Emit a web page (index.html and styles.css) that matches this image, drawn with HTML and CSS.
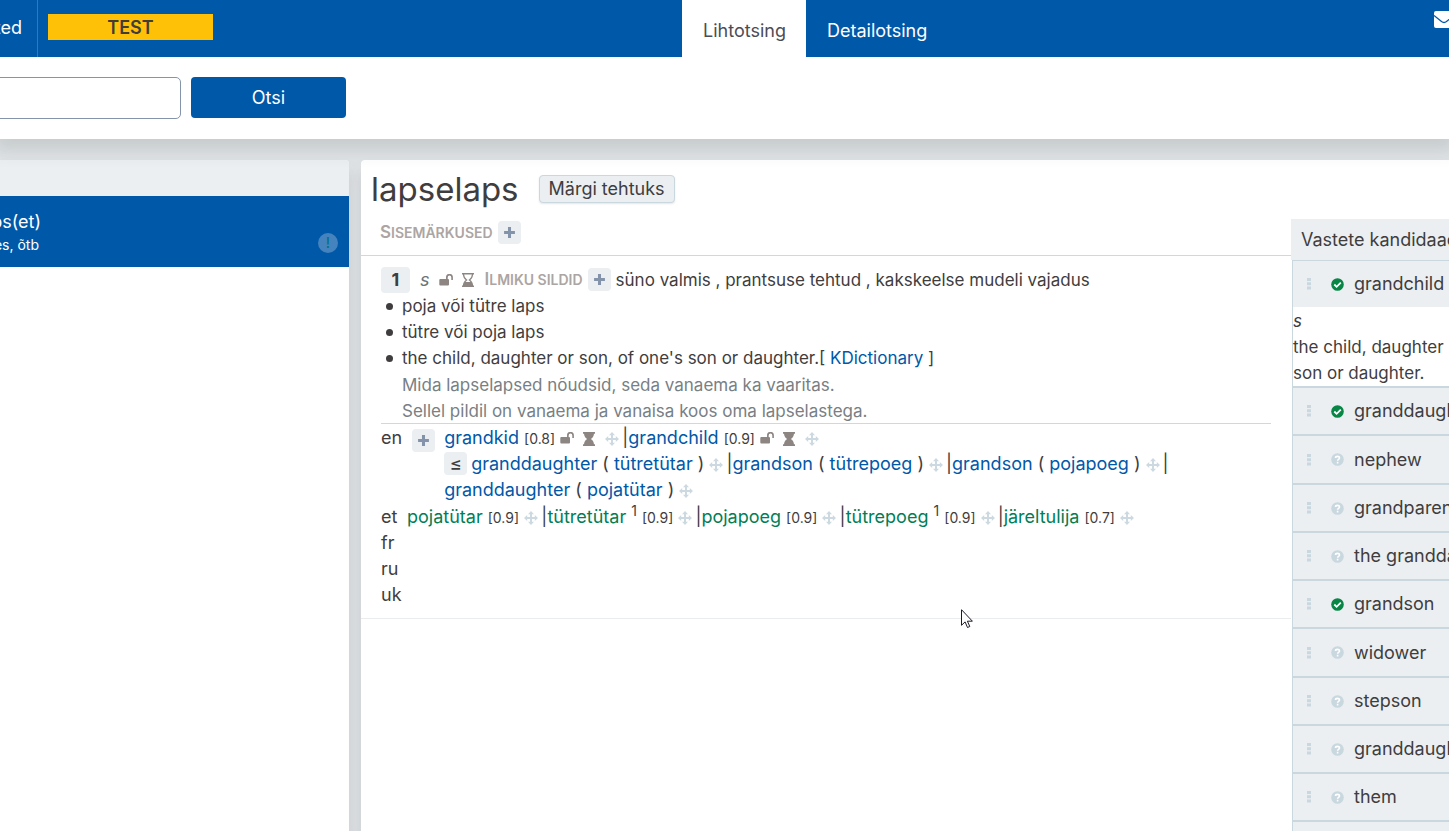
FILE: index.html
```html
<!DOCTYPE html>
<html lang="et">
<head>
<meta charset="utf-8">
<title>lapselaps</title>
<link rel="stylesheet" href="styles.css">
</head>
<body>
<svg class="sprite" aria-hidden="true">
  <symbol id="plus" viewBox="0 0 12 12"><path d="M4.600 1h2.800v3.600H11v2.800H7.400V11H4.600V7.400H1V4.600h3.600z"/></symbol>
  <symbol id="unlock" viewBox="0 0 14 12"><path d="M1.300 5H7V3.400a3.400 3.400 0 0 1 6.900 0V6h-1.600V3.400a1.800 1.800 0 0 0-3.600 0V5h.3a1 1 0 0 1 1 1v4.500a1 1 0 0 1-1 1H1.300a1 1 0 0 1-1-1V6a1 1 0 0 1 1-1z"/></symbol>
  <symbol id="hourglass" viewBox="0 0 12 14"><path d="M0 0h12v1.800H0zM0 12.200h12V14H0zM1 1h10c0 3-1 4.600-3.200 6C10 8.400 11 10 11 13H1c0-3 1-4.600 3.200-6C2 5.600 1 4 1 1z"/></symbol>
  <symbol id="hourglass-end" viewBox="0 0 12 14"><path d="M0 0h12v1.500H0zM0 12.500h12V14H0z"/><path d="M1.500 1c0 3 1 4.600 3.100 6-2.100 1.400-3.100 3-3.100 6M10.500 1c0 3-1 4.600-3.100 6 2.100 1.400 3.100 3 3.100 6" fill="none" stroke="currentColor" stroke-width="1.200"/><path d="M2.500 9h7L11 13H1z"/></symbol>
  <symbol id="move" viewBox="0 0 14 14"><path d="M7 0l3 3.200H8v2.800h2.800V4L14 7l-3.200 3V8H8v2.800h2L7 14l-3-3.200h2V8H3.200v2L0 7l3.200-3v2H6V3.200H4z"/></symbol>
  <symbol id="grip" viewBox="0 0 4 12"><path d="M0 0h4v3H0zM0 4.300h4v3H0zM0 8.600h4v3H0z"/></symbol>
  <symbol id="check" viewBox="0 0 13 13"><circle cx="6.500" cy="6.500" r="6.300"/><path d="M3.300 6.500l2.300 2.300 4.200-4.200" fill="none" stroke="#fff" stroke-width="1.800"/></symbol>
  <symbol id="question" viewBox="0 0 13 13"><circle cx="6.500" cy="6.500" r="6.300"/><path d="M4.500 5c.1-2.200 4-2.200 4 0 0 1.400-1.900 1.300-1.900 2.700M6.600 8.700v1.700" fill="none" stroke="#fff" stroke-width="1.600"/></symbol>
</svg>

<header class="topbar">
  <div class="topbar-left">
    <div class="topbar-link"><a href="#">ted</a></div>
    <div class="env">TEST</div>
  </div>
  <nav class="tabs">
    <a class="tab tab-active" href="#">Lihtotsing</a>
    <a class="tab" href="#">Detailotsing</a>
  </nav>
  <a class="mail" href="#" aria-label="E-post">
    <svg width="20" height="17" viewBox="0 0 20 17"><rect width="20" height="17" rx="2" fill="#fff"/><path d="M0 4.500l7.500 6q2.500 2 5 0l7.500-6" fill="none" stroke="#0058a9" stroke-width="1.300"/></svg>
  </a>
</header>

<form class="search">
  <input class="search-input" type="text" aria-label="Otsing">
  <button class="search-button" type="button">Otsi</button>
</form>

<main class="workspace">
  <section class="results">
    <div class="results-head"></div>
    <a class="result" href="#">
      <span class="result-word"><span>ps(et)</span></span>
      <span class="result-meta"><span>es, õtb</span></span>
      <span class="result-alert">!</span>
    </a>
  </section>

  <article class="entry">
    <div class="entry-head">
      <h1>lapselaps</h1>
      <button class="done" type="button">Märgi tehtuks</button>
    </div>
    <div class="entry-body">
      <div class="lexeme">
        <div class="notes">
          <span class="caps">Sisemärkused</span>
          <button class="add" type="button" aria-label="Lisa sisemärkus"><svg><use href="#plus"/></svg></button>
        </div>
        <div class="sense">
          <div class="sense-head">
            <button class="number" type="button">1</button>
            <em class="pos">s</em>
            <svg class="unlock"><use href="#unlock"/></svg>
            <svg class="glass"><use href="#hourglass-end"/></svg>
            <span class="caps">Ilmiku sildid</span>
            <button class="add" type="button" aria-label="Lisa silt"><svg><use href="#plus"/></svg></button>
            <span class="labels">süno valmis , prantsuse tehtud , kakskeelse mudeli vajadus</span>
          </div>
          <ul class="definitions">
            <li>poja või tütre laps</li>
            <li>tütre või poja laps</li>
            <li>the child, daughter or son, of one's son or daughter.[ <a href="#">KDictionary</a> ]</li>
          </ul>
          <div class="usages">
            <p>Mida lapselapsed nõudsid, seda vanaema ka vaaritas.</p>
            <p>Sellel pildil on vanaema ja vanaisa koos oma lapselastega.</p>
          </div>
          <div class="languages">
            <div class="language">
              <span class="code">en</span>
              <button class="add" type="button" aria-label="Lisa vaste"><svg><use href="#plus"/></svg></button>
              <div class="matches">
                <div class="line"><a href="#">grandkid</a> <small>[0.8]</small> <svg class="unlock"><use href="#unlock"/></svg> <svg class="glass"><use href="#hourglass"/></svg> <svg class="move spaced"><use href="#move"/></svg>|<a href="#">grandchild</a> <small>[0.9]</small> <svg class="unlock"><use href="#unlock"/></svg> <svg class="glass"><use href="#hourglass"/></svg> <svg class="move spaced"><use href="#move"/></svg></div>
                <div class="line"><button class="number relation" type="button">≤</button><a href="#">granddaughter</a> ( <a href="#">tütretütar</a> ) <svg class="move"><use href="#move"/></svg>|<a href="#">grandson</a> ( <a href="#">tütrepoeg</a> ) <svg class="move"><use href="#move"/></svg>|<a href="#">grandson</a> ( <a href="#">pojapoeg</a> ) <svg class="move"><use href="#move"/></svg>|</div>
                <div class="line"><a href="#">granddaughter</a> ( <a href="#">pojatütar</a> ) <svg class="move"><use href="#move"/></svg></div>
              </div>
            </div>
            <div class="language">
              <span class="code">et</span>
              <div class="line synonyms"><a href="#">pojatütar</a> <small>[0.9]</small> <svg class="move"><use href="#move"/></svg>|<a href="#">tütretütar</a> <sup>1</sup> <small>[0.9]</small> <svg class="move"><use href="#move"/></svg>|<a href="#">pojapoeg</a> <small>[0.9]</small> <svg class="move"><use href="#move"/></svg>|<a href="#">tütrepoeg</a> <sup>1</sup> <small>[0.9]</small> <svg class="move"><use href="#move"/></svg>|<a href="#">järeltulija</a> <small>[0.7]</small> <svg class="move"><use href="#move"/></svg></div>
            </div>
            <div class="language"><span class="code">fr</span></div>
            <div class="language"><span class="code">ru</span></div>
            <div class="language"><span class="code">uk</span></div>
          </div>
        </div>
      </div>

      <aside class="candidates">
        <h2>Vastete kandidaad</h2>
        <ul class="cards">
          <li>
            <div class="card"><svg class="grip"><use href="#grip"/></svg><svg class="state ok"><use href="#check"/></svg>grandchild</div>
            <div class="detail"><em>s</em><br>the child, daughter<br>son or daughter.</div>
          </li>
          <li><div class="card"><svg class="grip"><use href="#grip"/></svg><svg class="state ok"><use href="#check"/></svg>granddaugh</div></li>
          <li><div class="card"><svg class="grip"><use href="#grip"/></svg><svg class="state"><use href="#question"/></svg>nephew</div></li>
          <li><div class="card"><svg class="grip"><use href="#grip"/></svg><svg class="state"><use href="#question"/></svg>grandparen</div></li>
          <li><div class="card"><svg class="grip"><use href="#grip"/></svg><svg class="state"><use href="#question"/></svg>the grandda</div></li>
          <li><div class="card"><svg class="grip"><use href="#grip"/></svg><svg class="state ok"><use href="#check"/></svg>grandson</div></li>
          <li><div class="card"><svg class="grip"><use href="#grip"/></svg><svg class="state"><use href="#question"/></svg>widower</div></li>
          <li><div class="card"><svg class="grip"><use href="#grip"/></svg><svg class="state"><use href="#question"/></svg>stepson</div></li>
          <li><div class="card"><svg class="grip"><use href="#grip"/></svg><svg class="state"><use href="#question"/></svg>granddaugh</div></li>
          <li><div class="card"><svg class="grip"><use href="#grip"/></svg><svg class="state"><use href="#question"/></svg>them</div></li>
          <li><div class="card"></div></li>
        </ul>
      </aside>
    </div>
  </article>
</main>

<svg class="cursor" width="12" height="20" viewBox="0 0 12 20" aria-hidden="true"><path d="M.5.700v15.600l3.600-3.400 2.400 5.600 2.300-1-2.400-5.300h5z" fill="#fff" stroke="#1c1c28"/></svg>
</body>
</html>
```

FILE: styles.css
```css
* { box-sizing: border-box; }

body {
  margin: 0;
  height: 100vh;
  overflow: hidden;
  display: flex;
  flex-direction: column;
  background: #e0e4e6;
  color: #3f3d3e;
  font: 18px/26px Inter, "Open Sans", sans-serif;
}

a { color: #0058a9; text-decoration: none; }
button, input { font: inherit; color: inherit; }
button { padding: 0; border: 0; }
svg { fill: currentColor; flex: none; }
.sprite { position: absolute; width: 0; height: 0; }

/* Top bar */
.topbar { display: flex; position: relative; z-index: 2; height: 57px; flex: none; background: #0058a9; }
.topbar-left { display: flex; width: calc(47% + 1px); min-width: 220px; }
.topbar-link {
  display: flex;
  justify-content: flex-end;
  width: 38px;
  padding: 15px 15px 0 0;
  border-right: 1px solid #3379ba;
}
.topbar-link a, .tab { color: #fff; }
.env {
  width: 165px;
  height: 26px;
  margin: 14px 10px;
  background: #ffc107;
  font-weight: 600;
  line-height: 28px;
  text-align: center;
}
.tabs { display: flex; flex: 1; }
.tab { padding: 18px 20px 0 21px; }
.tab-active { background: #fff; color: #4c4c55; }
.mail { margin: 11px -5px 0 0; }
.mail svg { display: block; }

/* Search */
.search {
  display: flex;
  flex: none;
  gap: 10px;
  height: 82px;
  padding-top: 20px;
  background: #fff;
  box-shadow: 0 6px 16px 6px rgba(60, 75, 75, 0.15);
  z-index: 1;
}
.search-input {
  width: 186px;
  height: 42px;
  margin-left: -5px;
  border: 1px solid #8495ab;
  border-radius: 5px;
  background: #fff;
}
.search-button {
  width: 155px;
  height: 41px;
  border-radius: 4px;
  background: #0058a9;
  color: #fff;
}

/* Panels */
.workspace { display: flex; flex: 1; gap: 12px; min-height: 0; padding-top: 21px; }
.results {
  flex: none;
  width: 349px;
  background: #fff;
  border-radius: 0 4px 0 0;
  box-shadow: 0 10px 14px rgba(80, 75, 85, 0.16);
}
.results-head { height: 36px; background: #ebeff2; border-radius: 0 4px 0 0; }
.result {
  display: grid;
  grid-template-columns: 41px 1fr 20px;
  grid-template-rows: 24px 20px;
  height: 71px;
  padding: 13px 11px 0 0;
  background: #0058a9;
  color: #fff;
}
.result-word, .result-meta { display: flex; justify-content: flex-end; white-space: nowrap; }
.result-meta { grid-row: 2; width: 39px; font-size: 14px; line-height: 24px; }
.result-alert {
  grid-area: 2 / 3;
  height: 20px;
  border-radius: 50%;
  background: #4583be;
  color: #006f78;
  font-size: 15px;
  line-height: 20px;
  text-align: center;
}

.entry {
  display: flex;
  flex-direction: column;
  flex: 1;
  min-width: 0;
  background: #fff;
  border-radius: 4px 0 0 0;
  box-shadow: 0 10px 14px rgba(80, 75, 85, 0.16);
}
.entry-head { display: flex; align-items: center; gap: 20px; height: 58px; margin-bottom: 1px; padding-left: 10px; }
h1 { margin: 0; font-size: 33px; font-weight: 400; line-height: 40px; }
.done {
  height: 28px;
  padding: 0 9px;
  border: 1px solid #c9d7df;
  border-radius: 4px;
  background: #ebeff2;
  box-shadow: 0 1px 2px rgba(0, 0, 0, 0.1);
}
.entry-body { display: flex; flex: 1; min-height: 0; }
.lexeme { flex: 1; min-width: 0; }

.notes {
  display: flex;
  align-items: center;
  gap: 5px;
  height: 37px;
  padding: 0 0 9px 19px;
  border-bottom: 1px solid #ccd9e0;
}
.caps {
  color: #aca5a3;
  font-size: 14px;
  font-weight: 600;
  text-transform: uppercase;
  white-space: nowrap;
}
.caps::first-letter { font-size: 17px; }
.add {
  display: grid;
  place-items: center;
  flex: none;
  width: 23px;
  height: 23px;
  border-radius: 4px;
  background: #ebeff2;
  color: #8393aa;
}
.add svg { width: 13px; height: 13px; }

/* Sense */
.sense { padding: 10px 20px; border-bottom: 1px solid #eaecee; }
.sense-head { display: flex; align-items: center; height: 27px; }
.number {
  width: 29px;
  height: 26px;
  border-radius: 4px;
  background: #ebeff2;
  font-weight: 700;
}
.pos { margin: 0 9px 0 10px; color: #6b7478; }
.unlock { width: 14px; height: 12px; color: #8c8582; }
.glass { width: 12px; height: 14px; color: #8c8582; }
.sense-head .glass { margin: 0 11px 0 9px; }
.sense-head .add { margin: 0 5px; }
.labels, .definitions, .usages { font-size: 17px; }
.definitions { margin: 0; padding-left: 21px; list-style: none; }
.definitions li { position: relative; }
.definitions li::before {
  content: "";
  position: absolute;
  left: -16px;
  top: 10px;
  width: 7px;
  height: 7px;
  border-radius: 50%;
  background: #3f3d3e;
}
.usages { padding: 1px 0 0 21px; color: #788084; }
.usages p { margin: 0; }

.languages { margin-top: -1px; border-top: 1px solid #ccd9e0; padding-top: 1px; }
.language { display: flex; min-height: 26px; }
.language > .add { margin: 4px 9px 0 10px; }
.language .code { flex: none; min-width: 21px; }
.matches { padding-bottom: 1px; }
.line { white-space: nowrap; height: 26px; }
.line small { font-size: 14px; }
.line sup { font-size: 14px; line-height: 0; }
.line .glass { margin-left: 4px; vertical-align: -2px; }
.line .move { width: 14px; height: 14px; margin-right: 3px; color: #ccd9e0; vertical-align: -2px; }
.line .spaced { margin-left: 5px; }
.synonyms { padding-left: 5px; }
.synonyms a { color: #007e56; }
.relation { width: 23px; height: 23px; margin-right: 4px; font-weight: 500; line-height: 23px; }

/* Candidates */
.candidates { flex: none; width: 158px; overflow: hidden; white-space: nowrap; }
h2 { margin: 0; height: 41px; padding: 8px 0 0 10px; background: #ebeff2; font-size: 18px; font-weight: 400; line-height: 26px; }
.cards { margin: 0 0 0 1px; padding: 0; list-style: none; border: solid #c9d7df; border-width: 1px 0 0 1px; }
.cards li + li { border-top: 2px solid #c9d7df; }
.card { display: flex; align-items: center; height: 46px; padding-left: 14px; background: #ebeff2; }
.cards li:nth-child(4n + 3) .card { height: 47px; }
.grip { width: 4px; height: 12px; margin-right: 20px; color: #c9d7df; }
.state { width: 13px; height: 13px; margin-right: 10px; color: #c9d7df; }
.ok { color: #078645; }
.detail { background: #fff; padding-top: 1px; font-size: 17px; }

.cursor { position: absolute; left: 961px; top: 609px; z-index: 3; }
```
